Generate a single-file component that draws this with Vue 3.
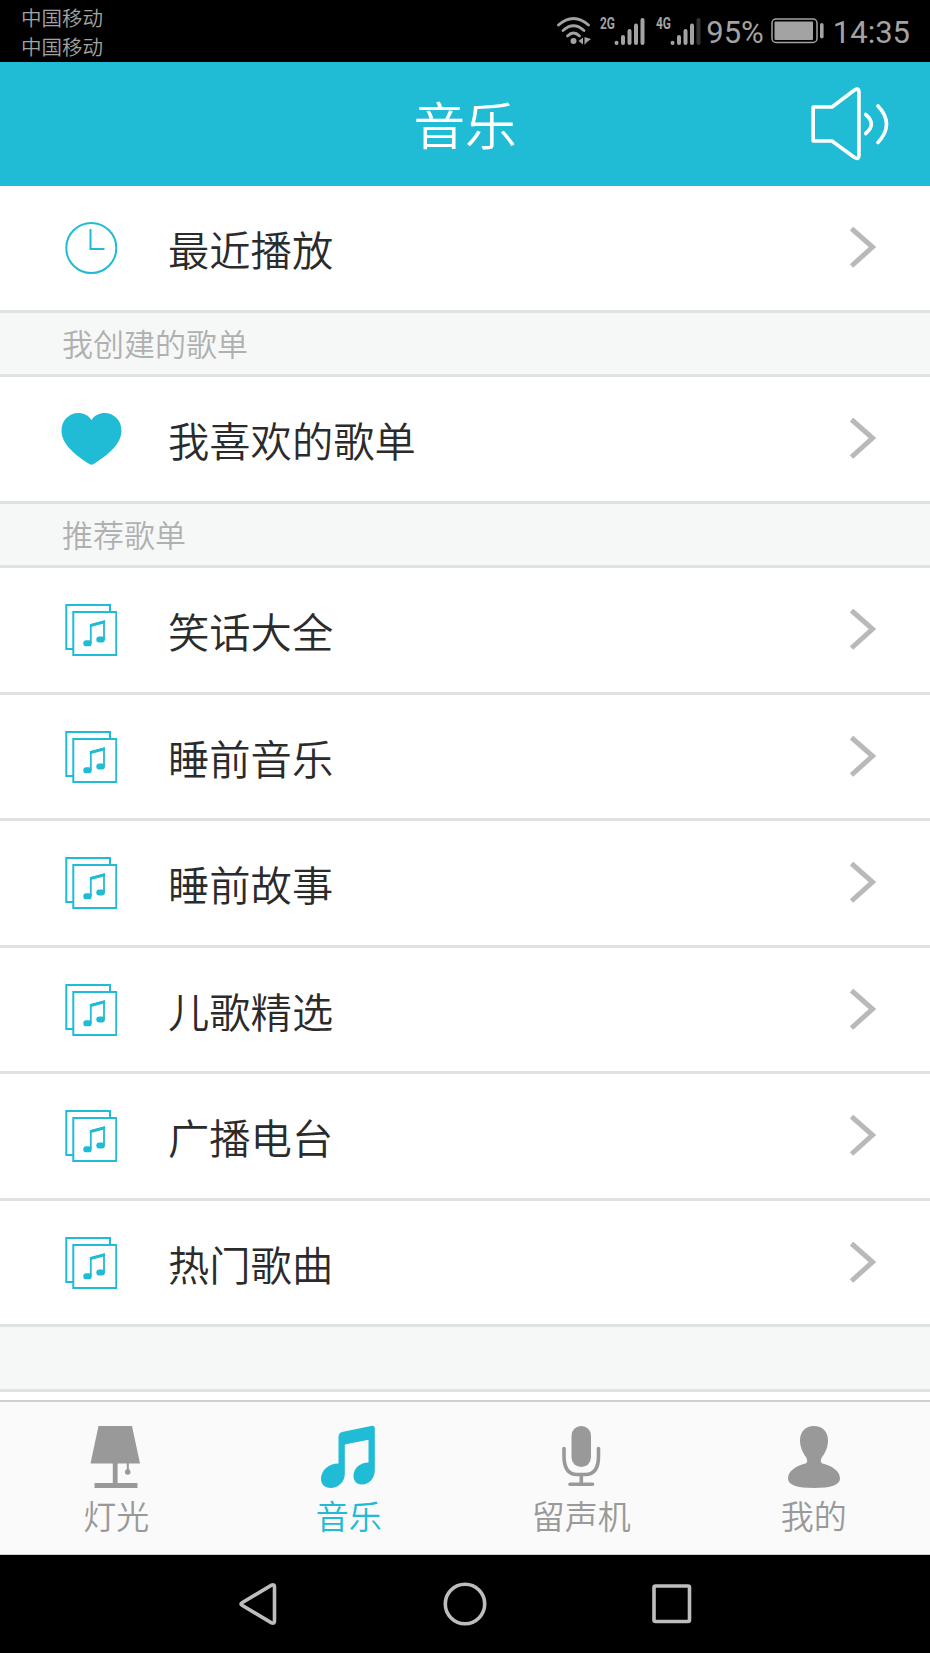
<template>
  <div class="phone">
    <div class="status-bar">
      <div class="carriers">
        <span>中国移动</span>
        <span>中国移动</span>
      </div>
      <div class="status-right">
        <svg class="wifi" width="36" height="30" viewBox="0 0 36 30">
          <g fill="none" stroke="#a3a3a3" stroke-width="2.8" stroke-linecap="round">
            <path d="M2.500 9Q17.500 -4 32.500 9" />
            <path d="M7 14.500Q17.500 5 28 14.500" />
            <path d="M11.500 20Q17.500 14 23.500 20" />
          </g>
          <circle cx="17.500" cy="25" r="3" fill="#a3a3a3" />
          <path d="M22.500 25l4.500-3.500v7zM28.500 21v8l2-2.500 4.500-3.500z" fill="#a3a3a3" />
        </svg>
        <svg
          v-for="s in sinais"
          :key="s.label"
          class="signal"
          width="48"
          height="42"
          viewBox="0 -5 48 42"
        >
          <text x="1" y="14.300" textLength="15" lengthAdjust="spacingAndGlyphs">{{ s.label }}</text>
          <g stroke-width="4" stroke-linecap="round">
            <path
              v-for="(b, i) in barras"
              :key="i"
              :d="b"
              :stroke="i < s.level ? '#a3a3a3' : '#333333'"
            />
          </g>
        </svg>
        <span class="percent">95%</span>
        <svg class="battery" width="53" height="26" viewBox="0 0 53 26">
          <rect x="1" y="1" width="45" height="23.500" rx="4" fill="none" stroke="#a3a3a3" stroke-width="1.500" />
          <rect x="3.500" y="3.500" width="38.500" height="18.500" rx="1" fill="#a3a3a3" />
          <rect x="49" y="5" width="3.600" height="15.500" rx="1.800" fill="#a3a3a3" />
        </svg>
        <span class="time">14:35</span>
      </div>
    </div>

    <header class="header">
      <h1 class="title">音乐</h1>
      <svg class="speaker" width="80" height="76" viewBox="0 0 80 76">
        <path d="M3.200 21H22L44.500 4Q49 1.500 49 6V69.500Q49 74 44.500 71.500L22 55H3.200Z" />
        <path d="M55.700 28.500Q67 38 55.700 47.500" />
        <path d="M68 20Q85 38 68 56.500" />
      </svg>
    </header>

    <main class="content">
      <template v-for="(g, gi) in grupos" :key="gi">
        <div v-if="gi > 0" class="section">{{ g.titulo }}</div>
        <div v-for="item in g.itens" :key="item" class="row">
          <span class="row-icon">
            <svg v-if="g.icone === 'clock'" width="52" height="52" viewBox="0 0 52 52">
              <circle cx="26.300" cy="26" r="25" fill="none" stroke="#20bbd5" stroke-width="2" />
              <path d="M25.500 7V27H39.500" fill="none" stroke="#20bbd5" stroke-width="2" />
            </svg>
            <svg v-else-if="g.icone === 'heart'" width="61" height="53" viewBox="-0.5 0.5 61 53">
              <path
                d="M30 7.500C26.500 2.500 22 .5 17 .5C7.500 .5 0 8 0 18C0 32 14.500 43 27.500 51.300Q30 53 32.500 51.300C45.500 43 60 32 60 18C60 8 52.500 .5 43 .5C38 .5 33.500 2.500 30 7.500Z"
                fill="#20bbd5"
              />
            </svg>
            <svg v-else width="52" height="52" viewBox="0 0 52 52">
              <path d="M8 45H1.300V1H45V8" fill="none" stroke="#20bbd5" stroke-width="2" />
              <rect x="8.300" y="8" width="43" height="43" fill="none" stroke="#20bbd5" stroke-width="2" />
              <path d="M25.800 39V21L39 17.500V35.500" fill="none" stroke="#20bbd5" stroke-width="1.800" />
              <path d="M24.900 20.300L39.900 16.200V19.200L24.900 23.300Z" fill="#20bbd5" />
              <rect x="18.300" y="36.300" width="8.400" height="6" rx="2.900" fill="#20bbd5" />
              <rect x="31.300" y="32.500" width="8.600" height="6" rx="2.900" fill="#20bbd5" />
            </svg>
          </span>
          <span class="row-label">{{ item }}</span>
          <svg class="chevron" width="28" height="42" viewBox="0 0 28 42">
            <path d="M2.500 1.500L23.500 20L2.500 39" />
          </svg>
        </div>
      </template>
      <div class="section"></div>
    </main>

    <nav class="tabs">
      <div class="tab">
        <svg width="60" height="64" viewBox="0 0 60 64">
          <path d="M12.500 1H46L54 38.500H4.500ZM26.800 38H31.600V58H51.500V63H8.500V58H26.800Z" />
          <path d="M40.800 38H42.800V44Q44.500 45 44.500 47A2.800 2.800 0 0 1 38.900 47Q38.900 45 40.800 44Z" />
        </svg>
        <span>灯光</span>
      </div>
      <div class="tab active">
        <svg width="60" height="64" viewBox="0 0 60 64">
          <path
            d="M19.500 12Q19.500 8 23 7L52 1Q55.800 .3 55.800 3.500V45C55.800 53 50.500 59.500 43 59.500C38 59.500 34.500 56 34.500 51C34.500 44 40 37.500 49.500 37.500V14.800L25.800 19.500V49C25.800 57 19 63 11.500 63C6 63 2 59.500 2 54C2 46 9 38.500 19.500 38.500Z"
          />
        </svg>
        <span>音乐</span>
      </div>
      <div class="tab">
        <svg width="60" height="64" viewBox="0 0 60 64">
          <rect x="20.500" y="1" width="19.500" height="41" rx="9.700" />
          <path
            d="M13 23.500V31Q13 49.500 26 49.500H34.500Q47.500 49.500 47.500 31V23.500M30.300 50V58.500M19 59.300H41.500"
            class="mic-line"
          />
        </svg>
        <span>留声机</span>
      </div>
      <div class="tab">
        <svg width="60" height="64" viewBox="0 0 60 64">
          <path
            d="M30 1C38.500 1 44 6.500 44 15.500C44 23 40.500 28.500 37.500 33Q35.800 37.500 38.500 38.500C48 41 56 46 56 53.500C56 60 47 63 30 63C13 63 4 60 4 53.500C4 46 12 41 21.500 38.500Q24.200 37.500 22.500 33C19.500 28.500 16 23 16 15.500C16 6.500 21.500 1 30 1Z"
          />
        </svg>
        <span>我的</span>
      </div>
    </nav>

    <div class="nav-bar">
      <svg width="44" height="44" viewBox="0 0 44 44">
        <path d="M6 20.800L35.500 3.200Q38.500 2 38.500 5V39Q38.500 42 35.500 40.800L6 23.200Q4 22 6 20.800Z" />
      </svg>
      <svg width="44" height="44" viewBox="0 0 44 44">
        <circle cx="22" cy="22" r="19.700" />
      </svg>
      <svg width="44" height="44" viewBox="0 0 44 44">
        <rect x="4" y="4" width="35.500" height="35.500" rx="1.500" />
      </svg>
    </div>
  </div>
</template>

<script setup>
const sinais = [
  { label: "2G", level: 5 },
  { label: "4G", level: 4 },
];

const barras = [
  "M17.500 27.800V28",
  "M24 22V28",
  "M30.500 16V28",
  "M37 10.500V28",
  "M43.500 5V28",
];

const grupos = [
  { titulo: "", icone: "clock", itens: ["最近播放"] },
  { titulo: "我创建的歌单", icone: "heart", itens: ["我喜欢的歌单"] },
  {
    titulo: "推荐歌单",
    icone: "album",
    itens: ["笑话大全", "睡前音乐", "睡前故事", "儿歌精选", "广播电台", "热门歌曲"],
  },
];
</script>

<style>
body {
  margin: 0;
  background: #000;
}
</style>

<style scoped>
.phone {
  width: 930px;
  height: 1653px;
  display: flex;
  flex-direction: column;
  overflow: hidden;
  background: #fff;
  font-family: "Noto Sans CJK SC", sans-serif;
  font-weight: 350;
}

svg {
  display: block;
  flex-shrink: 0;
}

.status-bar {
  height: 62px;
  flex-shrink: 0;
  display: flex;
  justify-content: space-between;
  box-sizing: border-box;
  padding: 0 20px 0 21px;
  background: #000;
  color: #a3a3a3;
}

.carriers {
  display: flex;
  flex-direction: column;
  padding-top: 3px;
  font-size: 20.5px;
  line-height: 28.5px;
}

.status-right {
  display: flex;
  align-items: center;
  font-family: Roboto, sans-serif;
  font-size: 31px;
  font-weight: 400;
}

.wifi {
  margin-right: 7px;
}

.signal {
  margin-right: 8px;
  overflow: visible;
}

.signal text {
  font-size: 17px;
  font-weight: 700;
  fill: #a3a3a3;
}

.percent {
  margin-left: -5px;
  padding-top: 2px;
}

.battery {
  margin: 0 9px 0 7px;
}

.time {
  padding-top: 2px;
}

.header {
  height: 124px;
  flex-shrink: 0;
  display: grid;
  grid-template-columns: 1fr auto 1fr;
  align-items: center;
  padding: 0 40px;
  background: #20bbd5;
}

.title {
  grid-column: 2;
  margin: 0;
  padding-bottom: 2px;
  color: #fff;
  font-size: 51.6px;
  font-weight: 350;
  line-height: 74px;
}

.speaker {
  justify-self: end;
  fill: none;
  stroke: #fff;
  stroke-width: 3.6;
  stroke-linecap: round;
  stroke-linejoin: round;
}

.content {
  flex: 1;
  padding-top: 0.6px;
}

.row {
  display: flex;
  align-items: center;
  box-sizing: border-box;
  height: 126.5px;
  padding: 0 53px 0 61px;
  border-bottom: 3px solid #dfe2e2;
}

.row-icon {
  width: 60px;
  display: flex;
  justify-content: center;
}

.row-label {
  flex: 1;
  margin-left: 47px;
  color: #2b2b2b;
  font-size: 41.3px;
  line-height: 60px;
}

.chevron {
  fill: none;
  stroke: #b9b9b9;
  stroke-width: 5;
}

.section {
  box-sizing: border-box;
  height: 64.4px;
  padding-left: 62px;
  border-bottom: 3px solid #dfe2e2;
  background: #f6f8f7;
  color: #b0b0b0;
  font-size: 31px;
  line-height: 60px;
}

.tabs {
  display: flex;
  flex-shrink: 0;
  box-sizing: border-box;
  height: 155px;
  border-top: 2px solid #cfcfcf;
  border-bottom: 1px solid #cfcfcf;
  background: #fafafa;
}

.tab {
  flex: 1;
  display: flex;
  flex-direction: column;
  align-items: center;
  padding-top: 23px;
  color: #999;
  font-size: 33px;
  line-height: 53px;
}

.tab svg {
  fill: currentColor;
}

.tab .mic-line {
  fill: none;
  stroke: currentColor;
  stroke-width: 3.6;
  stroke-linecap: round;
}

.tab.active {
  color: #20bbd5;
}

.nav-bar {
  height: 98px;
  flex-shrink: 0;
  display: flex;
  align-items: center;
  justify-content: center;
  gap: 162.7px;
  background: #000;
}

.nav-bar svg {
  fill: none;
  stroke: #bdbdbd;
  stroke-width: 3.6;
}
</style>
